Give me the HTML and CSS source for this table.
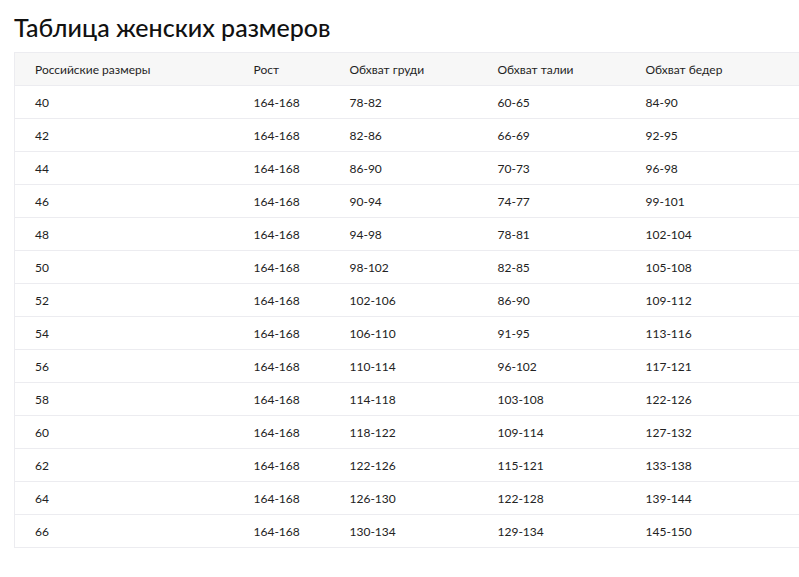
FILE: index.html
```html
<!DOCTYPE html>
<html lang="ru">
<head>
<meta charset="utf-8">
<title>Таблица женских размеров</title>
<link rel="stylesheet" href="styles.css">
</head>
<body>
<div class="page">
  <h1 class="title">Таблица женских размеров</h1>
  <table class="sizes">
    <colgroup>
      <col class="c1"><col class="c2"><col class="c3"><col class="c4"><col class="c5">
    </colgroup>
    <thead>
      <tr><th>Российские размеры</th><th>Рост</th><th>Обхват груди</th><th>Обхват талии</th><th>Обхват бедер</th></tr>
    </thead>
    <tbody>
      <tr><td>40</td><td>164-168</td><td>78-82</td><td>60-65</td><td>84-90</td></tr>
      <tr><td>42</td><td>164-168</td><td>82-86</td><td>66-69</td><td>92-95</td></tr>
      <tr><td>44</td><td>164-168</td><td>86-90</td><td>70-73</td><td>96-98</td></tr>
      <tr><td>46</td><td>164-168</td><td>90-94</td><td>74-77</td><td>99-101</td></tr>
      <tr><td>48</td><td>164-168</td><td>94-98</td><td>78-81</td><td>102-104</td></tr>
      <tr><td>50</td><td>164-168</td><td>98-102</td><td>82-85</td><td>105-108</td></tr>
      <tr><td>52</td><td>164-168</td><td>102-106</td><td>86-90</td><td>109-112</td></tr>
      <tr><td>54</td><td>164-168</td><td>106-110</td><td>91-95</td><td>113-116</td></tr>
      <tr><td>56</td><td>164-168</td><td>110-114</td><td>96-102</td><td>117-121</td></tr>
      <tr><td>58</td><td>164-168</td><td>114-118</td><td>103-108</td><td>122-126</td></tr>
      <tr><td>60</td><td>164-168</td><td>118-122</td><td>109-114</td><td>127-132</td></tr>
      <tr><td>62</td><td>164-168</td><td>122-126</td><td>115-121</td><td>133-138</td></tr>
      <tr><td>64</td><td>164-168</td><td>126-130</td><td>122-128</td><td>139-144</td></tr>
      <tr><td>66</td><td>164-168</td><td>130-134</td><td>129-134</td><td>145-150</td></tr>
    </tbody>
  </table>
</div>
</body>
</html>
```

FILE: styles.css
```css
html, body {
  margin: 0;
  padding: 0;
  background: #ffffff;
}
body {
  font-family: "Lato", "Open Sans", sans-serif;
  color: #1f1f1f;
}
.page {
  padding: 12px 0 0 14px;
}
.title {
  margin: 0 0 10px 0;
  font-size: 25px;
  line-height: 30px;
  font-weight: 500;
  color: #111111;
}
.sizes {
  border-collapse: collapse;
  table-layout: fixed;
  width: 785px;
  font-size: 12px;
  border: 1px solid #ececf0;
  border-right: 0;
}
.c1 { width: 219px; }
.c2 { width: 96px; }
.c3 { width: 148px; }
.c4 { width: 148px; }
.c5 { width: 174px; }
.sizes th,
.sizes td {
  text-align: left;
  font-weight: 400;
  height: 32px;
  padding: 0 0 0 20px;
  border-bottom: 1px solid #ececf0;
  color: #222222;
}
.sizes thead th {
  background: #f7f7f7;
  color: #1f1f1f;
}
```
